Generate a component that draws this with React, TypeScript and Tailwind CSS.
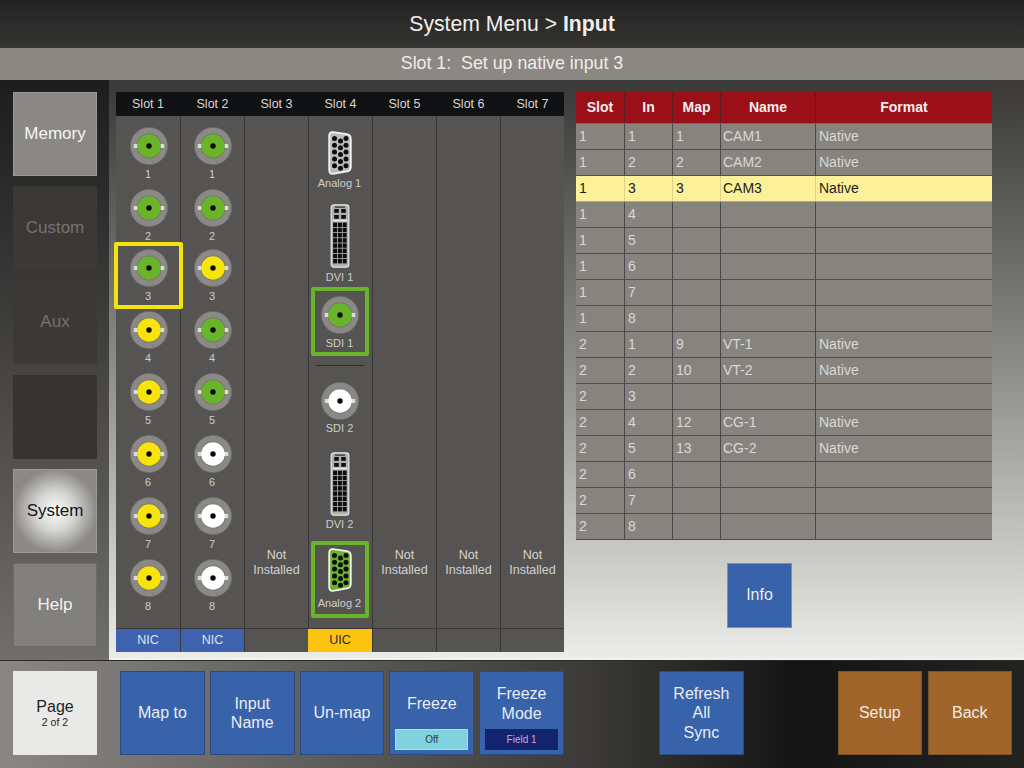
const FONT = "font-['Liberation_Sans',Arial,sans-serif]";

const PORT_COLORS: Record<string, string> = {
  g: "#6ab42a",
  y: "#f6e40c",
  w: "#ffffff",
};

function Bnc({ color }: { color: string }) {
  return (
    <svg width="38" height="38" viewBox="0 0 38 38" className="block shrink-0">
      <circle cx="19" cy="19" r="18.6" fill="#8b8986" stroke="#6f6d6a" strokeWidth="0.8" />
      <circle cx="19" cy="19" r="12.4" fill="#6f6d6a" />
      <rect x="3.8" y="17" width="4" height="4" fill="#dcdcda" />
      <rect x="30.2" y="17" width="4" height="4" fill="#dcdcda" />
      <circle cx="19" cy="19" r="11.8" fill={PORT_COLORS[color]} />
      <circle cx="19" cy="19" r="2.7" fill="#0b0b0b" />
    </svg>
  );
}

function Vga({ green }: { green?: boolean }) {
  const pins: [number, number][] = [];
  [6.5, 12.5, 18].forEach((x, c) => {
    [0, 1, 2, 3, 4].forEach((r) => {
      pins.push([x, (c === 1 ? 10 : 7.5) + r * 6.8]);
    });
  });
  return (
    <svg width="24" height="44" viewBox="0 0 24 44" className="block shrink-0">
      <path
        d="M5 1.2 L19 3.2 Q22.8 3.8 22.8 8 L22.8 36 Q22.8 39.8 19 40.4 L5 42.8 Q1.2 43.2 1.2 39 L1.2 5 Q1.2 0.8 5 1.2 Z"
        fill={green ? "#6ab42a" : "#bdbcba"}
        stroke="#f1f1ef"
        strokeWidth="1.8"
      />
      {pins.map(([x, y], i) => (
        <circle key={i} cx={x} cy={y} r="2.5" fill="#0d0d0d" />
      ))}
    </svg>
  );
}

function Dvi() {
  const cells: [number, number][] = [];
  for (let r = 0; r < 8; r++) {
    for (let c = 0; c < 3; c++) {
      cells.push([3.1 + c * 4.8, 18.6 + r * 5.2]);
    }
  }
  return (
    <svg width="20" height="64" viewBox="0 0 20 64" className="block shrink-0">
      <rect x="1.2" y="0.8" width="17.6" height="62.4" rx="2.6" fill="#b0afad" stroke="#e6e6e4" strokeWidth="1.2" />
      <rect x="5" y="2.4" width="10" height="1.4" fill="#3a3a3a" />
      <rect x="4.2" y="5" width="4.6" height="3.8" fill="#111" />
      <rect x="11.2" y="5" width="4.6" height="3.8" fill="#111" />
      <rect x="4.2" y="11" width="4.6" height="3.8" fill="#111" />
      <rect x="11.2" y="11" width="4.6" height="3.8" fill="#111" />
      <rect x="2.5" y="15.8" width="15" height="1.5" fill="#e6e6e4" />
      {cells.map(([x, y], i) => (
        <rect key={i} x={x} y={y} width="4" height="4.4" fill="#0d0d0d" />
      ))}
    </svg>
  );
}

function PortLabel({ text, className = "" }: { text: string; className?: string }) {
  return <div className={`h-[14px] text-[11px] leading-[14px] text-center text-[#cfcdca] whitespace-nowrap ${className}`}>{text}</div>;
}

function BncColumn({ colors, selected }: { colors: string; selected?: number }) {
  return (
    <div className={`flex flex-col items-center pt-[11px] ${selected !== undefined ? "pl-[2px]" : "pl-px"}`}>
      {colors.split("").map((c, i) => (
        <div key={i} className={`relative w-full flex flex-col items-center h-[62px] ${i === 2 ? "-mt-[2px]" : ""}`}>
          <Bnc color={c} />
          <PortLabel text={String(i + 1)} className="mt-[2px] -ml-[2px]" />
          {selected === i && (
            <div className="absolute -top-[7px] -left-[4px] w-[69px] h-[67px] border-4 border-[#f5e30c] rounded-[2px]" />
          )}
        </div>
      ))}
    </div>
  );
}

function SlotFourColumn() {
  return (
    <div className="flex flex-col items-center pt-[15px] pr-[2px]">
      <Vga />
      <PortLabel text="Analog 1" className="mt-px" />
      <div className="mt-[14px]">
        <Dvi />
      </div>
      <PortLabel text="DVI 1" className="mt-[2px]" />
      <div className="mt-[3px] w-[58px] border-4 border-[#6ab42a] rounded-[2px] flex flex-col items-center pt-[5px] pb-[2px]">
        <Bnc color="g" />
        <PortLabel text="SDI 1" className="mt-[2px]" />
      </div>
      <div className="mt-[9px] w-12 h-px bg-[#2b2a28]" />
      <div className="mt-[16px]">
        <Bnc color="w" />
      </div>
      <PortLabel text="SDI 2" className="mt-px" />
      <div className="mt-[17px]">
        <Dvi />
      </div>
      <PortLabel text="DVI 2" className="mt-px" />
      <div className="mt-[10px] w-[58px] border-4 border-[#6ab42a] rounded-[2px] flex flex-col items-center pt-[3px] pb-[4px]">
        <Vga green />
        <PortLabel text="Analog 2" className="mt-[4px]" />
      </div>
    </div>
  );
}

function NotInstalled() {
  return (
    <div className="h-full flex flex-col justify-end pb-[50px] text-center text-[12.5px] leading-[15px] text-[#d4d2cf]">
      <div>Not</div>
      <div>Installed</div>
    </div>
  );
}

const SLOTS = [
  { name: "Slot 1", foot: "NIC", body: <BncColumn colors="gggyyyyy" selected={2} /> },
  { name: "Slot 2", foot: "NIC", body: <BncColumn colors="ggyggwww" /> },
  { name: "Slot 3", foot: "", body: <NotInstalled /> },
  { name: "Slot 4", foot: "UIC", body: <SlotFourColumn /> },
  { name: "Slot 5", foot: "", body: <NotInstalled /> },
  { name: "Slot 6", foot: "", body: <NotInstalled /> },
  { name: "Slot 7", foot: "", body: <NotInstalled /> },
];

function SlotPanel() {
  return (
    <div className="w-[448px] h-[560px] flex bg-[#565452]">
      {SLOTS.map((s, i) => (
        <div key={s.name} className={`w-16 flex flex-col ${i > 0 ? "border-l border-[#393836]" : ""}`}>
          <div className={`h-[24px] bg-[#101113] text-[12.5px] leading-[24px] text-center text-[#d8d6d3] ${i > 0 ? "-ml-px pl-px" : ""}`}>{s.name}</div>
          <div className="h-[512px]">{s.body}</div>
          <div
            className={`h-[24px] border-t border-[#393836] text-[12.5px] leading-[23px] text-center ${
              s.foot === "NIC" ? "bg-[#3f62ae] text-[#dfe3ee]" : s.foot === "UIC" ? "-ml-px bg-[#fcc30f] text-[#2a2a2a]" : ""
            }`}
          >
            {s.foot}
          </div>
        </div>
      ))}
    </div>
  );
}

const ROWS: string[][] = [
  ["1", "1", "1", "CAM1", "Native"],
  ["1", "2", "2", "CAM2", "Native"],
  ["1", "3", "3", "CAM3", "Native"],
  ["1", "4", "", "", ""],
  ["1", "5", "", "", ""],
  ["1", "6", "", "", ""],
  ["1", "7", "", "", ""],
  ["1", "8", "", "", ""],
  ["2", "1", "9", "VT-1", "Native"],
  ["2", "2", "10", "VT-2", "Native"],
  ["2", "3", "", "", ""],
  ["2", "4", "12", "CG-1", "Native"],
  ["2", "5", "13", "CG-2", "Native"],
  ["2", "6", "", "", ""],
  ["2", "7", "", "", ""],
  ["2", "8", "", "", ""],
];

const COL_WIDTHS = ["w-12", "w-12", "w-12", "w-[95px]", "w-[177px]"];
const COL_PADS = ["pl-[3px]", "pl-[3px]", "pl-[3px]", "pl-[2px]", "pl-[3px]"];
const HEADERS = ["Slot", "In", "Map", "Name", "Format"];

function InputTable() {
  return (
    <div className="w-[416px] text-[14px]">
      <div className="flex h-[32px] bg-[#9a0f18] border-b border-[#6b6a68]">
        {HEADERS.map((h, i) => (
          <div
            key={h}
            className={`${COL_WIDTHS[i]} font-bold text-[#f2eeec] text-center leading-[30px] ${i > 0 ? "border-l border-[#5e1a1c]" : ""}`}
          >
            {h}
          </div>
        ))}
      </div>
      {ROWS.map((row, r) => {
        const active = r === 2;
        return (
          <div
            key={r}
            className={`flex h-[26px] border-b ${active ? "bg-[#fcf199] text-[#1d1d1b] border-[#b5ad76]" : "bg-[#878480] text-[#dad8d4] border-[#4f4e4c]"}`}
          >
            {row.map((cell, i) => (
              <div
                key={i}
                className={`${COL_WIDTHS[i]} ${COL_PADS[i]} leading-[25px] ${
                  i > 0 ? (active ? "border-l border-[#dcd28a]" : "border-l border-[#4a4947]") : ""
                }`}
              >
                {cell}
              </div>
            ))}
          </div>
        );
      })}
    </div>
  );
}

function SideButton({ label, className }: { label: string; className: string }) {
  return (
    <div className={`w-[84px] h-[84px] flex items-center justify-center text-[17px] ${className}`}>
      {label}
    </div>
  );
}

function BlueButton({ lines, chip }: { lines: string[]; chip?: "off" | "field" }) {
  return (
    <div className="w-[84.8px] h-[84px] bg-[#3862a9] border border-[#2b4a80] flex flex-col items-center text-[16px] leading-[19.5px] text-[#e9edf4] text-center">
      <div className={`flex-1 flex flex-col justify-center ${chip ? "pt-[6px]" : ""}`}>
        {lines.map((l) => (
          <div key={l}>{l}</div>
        ))}
      </div>
      {chip === "off" && (
        <div className="w-[73px] h-[21px] mb-[4px] bg-[#7fd2de] border border-[#a6e2ea] text-[10px] leading-[19px] text-[#27424a]">Off</div>
      )}
      {chip === "field" && (
        <div className="w-[73px] h-[21px] mb-[4px] bg-[#13246f] text-[10px] leading-[21px] text-[#c9a9dd]">Field 1</div>
      )}
    </div>
  );
}

export default function App() {
  return (
    <div className={`w-[1024px] h-[768px] overflow-hidden flex flex-col ${FONT}`}>
      <div className="h-[48px] bg-gradient-to-b from-[#232323] to-[#353432] text-center text-[21.2px] leading-[47px] text-[#f0efed]">
        System Menu &gt; <span className="font-bold">Input</span>
      </div>
      <div className="h-[32px] bg-[#8b8884] text-center text-[17.8px] leading-[30px] text-[#efedea] whitespace-pre">
        Slot 1:  Set up native input 3
      </div>

      <div className="h-[580px] flex">
        <div className="w-[109px] bg-gradient-to-b from-[#1d1d1d] to-[#716f6c] pt-3 pl-[13px] flex flex-col gap-[10px]">
          <SideButton label="Memory" className="bg-[#8a8885] border border-[#9c9a97] text-[#f7f6f4]" />
          <SideButton label="Custom" className="bg-[#3b3836] text-[#75726f]" />
          <SideButton label="Aux" className="bg-[#3b3836] text-[#75726f]" />
          <SideButton label="" className="bg-[#363331] mt-px" />
          <SideButton
            label="System"
            className="bg-[radial-gradient(circle,#fdfdfd_0%,#d4d4d2_34%,#8b8986_72%)] border border-[#9c9a97] text-[#141414]"
          />
          <SideButton label="Help" className="bg-[#81807c] border border-[#6c6a67] text-[#f2f1ef]" />
        </div>

        <div className="w-[915px] bg-gradient-to-b from-[#3a3937] to-[#ecece9] border-b-2 border-[#f1f1ef] pt-3 pl-[7px] flex gap-3">
          <SlotPanel />
          <div className="flex flex-col">
            <InputTable />
            <div className="mt-[23px] ml-[151px] w-[65px] h-[65px] pb-px bg-[#3862a9] border border-[#7b8fb5] flex items-center justify-center text-[16px] text-[#e9edf4]">
              Info
            </div>
          </div>
        </div>
      </div>

      <div className="h-[108px] bg-[linear-gradient(to_right,#8a8783_0%,#3a3937_58%,#141414_78%,#232322_100%)] flex items-start pt-[10px] pl-[13px] border-t border-[#2a2a28]">
        <div className="w-[84px] h-[84px] bg-[#e9e9e7] flex flex-col items-center justify-center text-[#1e1e1e]">
          <div className="text-[16px] leading-[18px]">Page</div>
          <div className="text-[10.5px] leading-[12px]">2 of 2</div>
        </div>
        <div className="ml-[23px] flex gap-[5px]">
          <BlueButton lines={["Map to"]} />
          <BlueButton lines={["Input", "Name"]} />
          <BlueButton lines={["Un-map"]} />
          <BlueButton lines={["Freeze"]} chip="off" />
          <BlueButton lines={["Freeze", "Mode"]} chip="field" />
        </div>
        <div className="ml-[95px]">
          <BlueButton lines={["Refresh", "All", "Sync"]} />
        </div>
        <div className="ml-[94px] flex gap-[6px]">
          <div className="w-[84px] h-[84px] bg-[#a0652a] border border-[#7d5224] flex items-center justify-center text-[16px] text-[#f1ebe2]">Setup</div>
          <div className="w-[84px] h-[84px] bg-[#a0652a] border border-[#7d5224] flex items-center justify-center text-[16px] text-[#f1ebe2]">Back</div>
        </div>
      </div>
    </div>
  );
}
